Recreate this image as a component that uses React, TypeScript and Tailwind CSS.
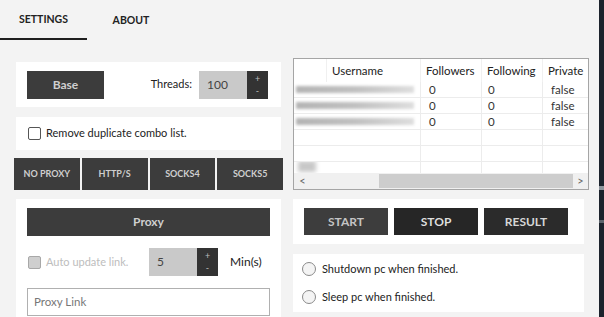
const font = { fontFamily: 'Lato, "Noto Sans", sans-serif' };

function Spinner({ value, width }: { value: string; width: string }) {
  return (
    <div className="flex h-[28px]">
      <div className={`${width} flex items-center bg-[#c9c9c9] pl-[8px] text-[12px] text-[#444]`}>{value}</div>
      <div className="flex w-[21px] flex-col items-center justify-center bg-[#333] text-[9px] leading-[12px] text-[#bbb]">
        <span>+</span>
        <span>-</span>
      </div>
    </div>
  );
}

function BlurBar() {
  return (
    <div className="h-[7px] w-[118px] bg-gradient-to-r from-[#b4b4b4] via-[#c0c0c0] to-[#dedede] blur-[1.5px]" />
  );
}

export default function App() {
  const rows = [0, 1, 2];
  const cols = ['w-[33px]', 'w-[94px]', 'w-[61px]', 'w-[61px]', 'flex-1'];
  return (
    <div className="flex h-[317px] w-[604px] overflow-hidden bg-[#f3f3f3] text-[#222]" style={font}>
      <div className="flex w-[599px] flex-col">
        {/* tabs */}
        <div className="flex h-[40px] items-stretch">
          <div className="flex w-[87px] items-center justify-center border-b-2 border-[#1f1f1f] pt-[2px] text-[10.5px] font-bold">SETTINGS</div>
          <div className="flex w-[88px] items-center justify-center pt-[2px] text-[10.5px] font-bold">ABOUT</div>
        </div>

        <div className="flex flex-1">
          {/* left column */}
          <div className="ml-[14px] mt-[22px] flex w-[269px] flex-col">
            <div className="mx-[2px] flex h-[45px] items-center bg-white pl-[11px] pr-[13px]">
              <div className="flex h-[28px] w-[77px] items-center justify-center bg-[#3c3c3c] text-[12px] font-bold text-[#cfcfcf]">Base</div>
              <span className="ml-auto mr-[7px] text-[11px]">Threads:</span>
              <Spinner value="100" width="w-[48px]" />
            </div>

            <div className="mx-[2px] mt-[10px] flex h-[33px] items-center gap-[5px] bg-white pl-[12px]">
              <div className="h-[13px] w-[13px] rounded-[2px] border border-[#555] bg-white" />
              <span className="text-[11px]">Remove duplicate combo list.</span>
            </div>

            <div className="mt-[8px] flex h-[32px] gap-[2px]">
              {['NO PROXY', 'HTTP/S', 'SOCKS4', 'SOCKS5'].map((t) => (
                <div key={t} className="flex flex-1 items-center justify-center bg-[#3c3c3c] text-[9px] font-bold text-[#cfcfcf]">
                  {t}
                </div>
              ))}
            </div>

            <div className="mx-[2px] mt-[9px] flex flex-1 flex-col bg-white px-[11px] pt-[9px]">
              <div className="flex h-[28px] items-center justify-center bg-[#3c3c3c] text-[12px] font-bold text-[#cfcfcf]">Proxy</div>
              <div className="mt-[12px] flex items-center">
                <div className="ml-[1px] h-[13px] w-[13px] rounded-[2px] border border-[#a8a8a8] bg-[#cfcfcf]" />
                <span className="ml-[5px] w-[103px] text-[11px] text-[#bdbdbd]">Auto update link.</span>
                <Spinner value="5" width="w-[48px]" />
                <span className="ml-[12px] text-[12px]">Min(s)</span>
              </div>
              <div className="mt-[12px] flex h-[28px] items-center border border-[#b0b0b0] pl-[6px] text-[11.5px] text-[#777]">Proxy Link</div>
            </div>
          </div>

          {/* right column */}
          <div className="ml-[10px] mt-[18px] flex w-[296px] flex-col">
            <div className="flex h-[132px] flex-col overflow-hidden border border-[#a5a5a5] bg-white">
              <div className="flex h-[23px] shrink-0 text-[11.5px]">
                {['', 'Username', 'Followers', 'Following', 'Private'].map((h, i) => (
                  <div key={i} className={`${cols[i]} flex items-center border-r border-[#f0f0f0] pl-[5px] last:border-r-0`}>
                    {h}
                  </div>
                ))}
              </div>
              <div className="flex-1 overflow-hidden">
                {[0, 1, 2, 3, 4, 5].map((r) => (
                  <div key={r} className="flex h-[16px] border-b border-[#ececec] text-[11.5px] leading-[15px]">
                    <div className="relative flex w-[127px] items-center overflow-hidden border-r border-[#ececec] pl-[2px]">
                      {rows.includes(r) && <BlurBar />}
                      {r === 5 && <div className="ml-[2px] mt-[-6px] h-[11px] w-[18px] bg-[#c8c8c8] blur-[2px]" />}
                    </div>
                    <div className="w-[61px] border-r border-[#ececec] pl-[8px] text-[#333]">{rows.includes(r) ? '0' : ''}</div>
                    <div className="w-[61px] border-r border-[#ececec] pl-[6px] text-[#333]">{rows.includes(r) ? '0' : ''}</div>
                    <div className="flex-1 pl-[8px] text-[#333]">{rows.includes(r) ? 'false' : ''}</div>
                  </div>
                ))}
              </div>
              <div className="flex h-[16px] shrink-0 items-center bg-[#f0f0f0] text-[11px] text-[#666]">
                <span className="w-[17px] text-center">&lt;</span>
                <div className="ml-[68px] h-[14px] w-[194px] bg-[#cdcdcd]" />
                <span className="flex-1 text-center">&gt;</span>
              </div>
            </div>

            <div className="mt-[9px] flex h-[45px] w-[291px] items-center gap-[6px] bg-white pl-[11px]">
              <div className="flex h-[27px] w-[84px] items-center justify-center bg-[#3d3d3d] text-[12px] font-bold text-[#c4c4c4]">START</div>
              <div className="flex h-[27px] w-[84px] items-center justify-center bg-[#262626] text-[12px] font-bold text-[#dedede]">STOP</div>
              <div className="flex h-[27px] w-[84px] items-center justify-center bg-[#2b2b2b] text-[12px] font-bold text-[#d6d6d6]">RESULT</div>
            </div>

            <div className="mt-[10px] flex h-[58px] w-[291px] flex-col justify-center gap-[11px] bg-white pl-[9px]">
              {['Shutdown pc when finished.', 'Sleep pc when finished.'].map((t) => (
                <div key={t} className="flex items-center gap-[6px]">
                  <div className="h-[14px] w-[14px] rounded-full border border-[#8a8a8a] bg-[#f4f4f4]" />
                  <span className="text-[11px]">{t}</span>
                </div>
              ))}
            </div>
          </div>
        </div>
      </div>
      <div className="flex w-[5px] flex-col bg-[#1b222c]">
        <div className="mt-[186px] h-[4px] bg-[#8d949c]" />
        <div className="mt-[30px] h-[3px] bg-[#5d646c]" />
      </div>
    </div>
  );
}
